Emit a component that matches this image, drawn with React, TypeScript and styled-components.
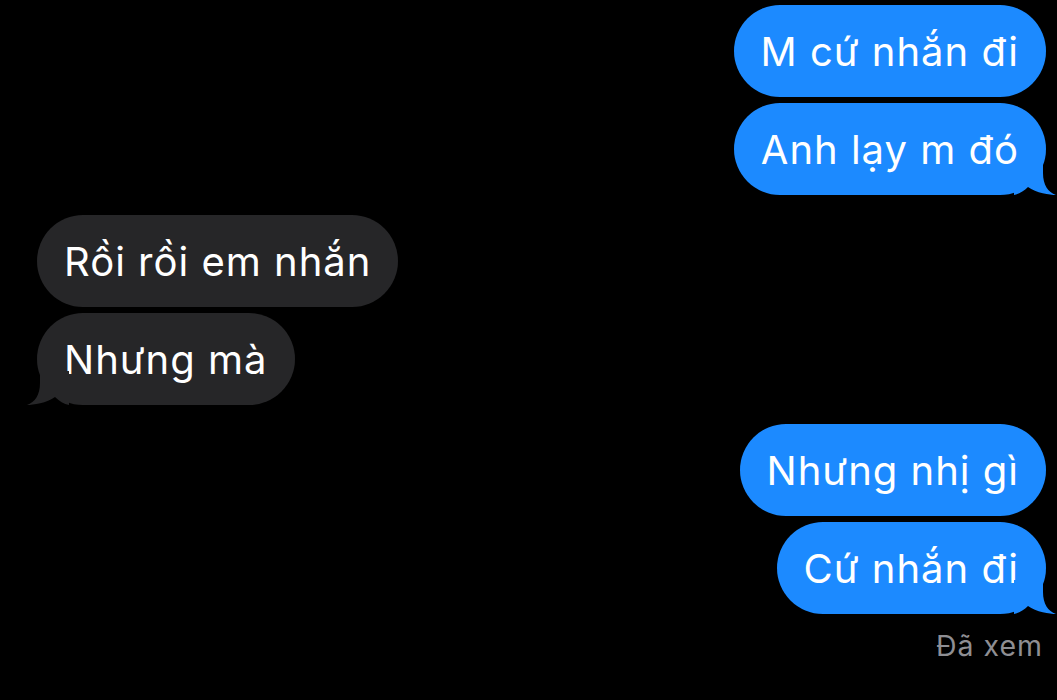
import React from "react";
import styled, { createGlobalStyle } from "styled-components";

const Global = createGlobalStyle`
  html, body { margin: 0; padding: 0; background: #000; }
  body { font-family: Inter, "Noto Sans", "DejaVu Sans", sans-serif; -webkit-font-smoothing: antialiased; }
`;

const Screen = styled.div`
  width: 1057px;
  height: 700px;
  background: #000;
  box-sizing: border-box;
  padding: 5px 11px 0 37px;
  display: flex;
  flex-direction: column;
  overflow: hidden;
`;

const Group = styled.div<{ $top: number }>`
  display: flex;
  flex-direction: column;
  gap: 6px;
  margin-top: ${(p) => p.$top}px;
`;

const Row = styled.div<{ $mine: boolean }>`
  display: flex;
  justify-content: ${(p) => (p.$mine ? "flex-end" : "flex-start")};
`;

const Bubble = styled.div<{ $mine: boolean }>`
  position: relative;
  box-sizing: border-box;
  height: 92px;
  padding: 0 27px;
  display: flex;
  align-items: center;
  border-radius: 46px;
  background: ${(p) => (p.$mine ? "#1c8aff" : "#262628")};
  color: #fff;
  font-size: 40px;
  letter-spacing: 1px;
  white-space: nowrap;
`;

const Tail = styled.svg<{ $mine: boolean }>`
  position: absolute;
  bottom: 0;
  width: 42px;
  height: 34px;
  ${(p) => (p.$mine ? "right: -10px;" : "left: -10px; transform: scaleX(-1);")}
`;

const Read = styled.div`
  align-self: flex-end;
  margin-top: 14px;
  margin-right: 3px;
  color: #8e8e93;
  font-size: 28.5px;
  letter-spacing: 1px;
`;

type Msg = { text: string; tail?: boolean };

const BubbleTail = ({ mine }: { mine: boolean }) => (
  <Tail $mine={mine} viewBox="0 0 42 34">
    <path
      d="M0 0 L29 0 L29 12 C29 24 34 31 42 34 C36 34 22 32 14 26 C10 30 5 33 0 34 Z"
      fill={mine ? "#1c8aff" : "#262628"}
    />
  </Tail>
);

const MessageGroup = ({ mine, msgs, top }: { mine: boolean; msgs: Msg[]; top: number }) => (
  <Group $top={top}>
    {msgs.map((m, i) => (
      <Row key={i} $mine={mine}>
        <Bubble $mine={mine}>
          {m.text}
          {m.tail && <BubbleTail mine={mine} />}
        </Bubble>
      </Row>
    ))}
  </Group>
);

export default function App() {
  return (
    <>
      <Global />
      <Screen>
        <MessageGroup
          mine
          top={0}
          msgs={[{ text: "M cứ nhắn đi" }, { text: "Anh lạy m đó", tail: true }]}
        />
        <MessageGroup
          mine={false}
          top={20}
          msgs={[{ text: "Rồi rồi em nhắn" }, { text: "Nhưng mà", tail: true }]}
        />
        <MessageGroup
          mine
          top={19}
          msgs={[{ text: "Nhưng nhị gì" }, { text: "Cứ nhắn đi", tail: true }]}
        />
        <Read>Đã xem</Read>
      </Screen>
    </>
  );
}
